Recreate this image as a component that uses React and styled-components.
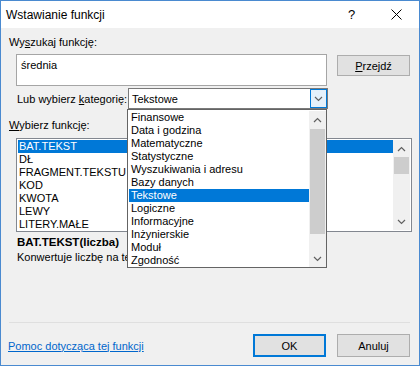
import React from "react";
import styled, { createGlobalStyle } from "styled-components";

const Global = createGlobalStyle`
  html, body { margin: 0; padding: 0; background: #ffffff; }
  * { box-sizing: border-box; }
`;

const FONT = `"Liberation Sans", Arial, sans-serif`;

const Window = styled.div`
  position: relative;
  width: 420px;
  height: 366px;
  border: 1px solid #4a8ad0;
  display: flex;
  flex-direction: column;
  font-family: ${FONT};
  font-size: 11px;
  color: #000;
  overflow: hidden;
`;

const TitleBar = styled.div`
  height: 27px;
  background: #fff;
  display: flex;
  align-items: center;
  padding-left: 5px;
  flex-shrink: 0;
`;

const Title = styled.div`
  flex: 1;
  font-size: 12px;
`;

const TitleButton = styled.div`
  width: 45px;
  height: 27px;
  display: flex;
  align-items: center;
  justify-content: center;
  font-size: 13px;
`;

const Body = styled.div`
  flex: 1;
  background: #f0f0f0;
  display: flex;
  flex-direction: column;
  padding: 0 9px 8px 7px;
`;

const Label = styled.div`
  height: 16px;
  line-height: 16px;
  margin-top: ${(p) => p.$mt || 0}px;
  margin-left: ${(p) => p.$ml || 0}px;
  white-space: nowrap;
`;

const U = styled.span`
  text-decoration: underline;
`;

const SearchRow = styled.div`
  display: flex;
  margin-top: 4px;
  margin-left: 8px;
  gap: 10px;
  align-items: flex-start;
`;

const SearchBox = styled.div`
  width: 200px;
  flex: 1;
  height: 32px;
  background: #fff;
  border: 1px solid #a5a5a5;
  padding: 2px 4px;
  line-height: 16px;
`;

const Button = styled.div`
  width: 73px;
  height: ${(p) => p.$h || 23}px;
  background: #e1e1e1;
  border: ${(p) => (p.$primary ? "2px solid #0078d7" : "1px solid #adadad")};
  display: flex;
  align-items: center;
  justify-content: center;
  margin-top: ${(p) => p.$mt || 0}px;
  flex-shrink: 0;
`;

const CategoryRow = styled.div`
  display: flex;
  align-items: center;
  margin-top: 2px;
  margin-left: 9px;
  height: 21px;
`;

const CategoryLabel = styled.div`
  width: 111px;
  white-space: nowrap;
`;

const Combo = styled.div`
  width: 200px;
  height: 21px;
  background: #fff;
  border: 1px solid #7a7a7a;
  display: flex;
  align-items: center;
  padding-left: 3px;
`;

const ComboText = styled.div`
  flex: 1;
`;

const ComboArrow = styled.div`
  width: 17px;
  height: 19px;
  background: #e5f1fb;
  border: 1px solid #0078d7;
  display: flex;
  align-items: center;
  justify-content: center;
`;

const ListBox = styled.div`
  margin-top: 5px;
  margin-left: 8px;
  width: 396px;
  height: 94px;
  background: #fff;
  border: 1px solid #828790;
  display: flex;
  padding: 1px;
`;

const Items = styled.div`
  flex: 1;
  display: flex;
  flex-direction: column;
`;

const Item = styled.div`
  height: 13px;
  line-height: 13px;
  padding-left: 1px;
  white-space: nowrap;
  background: ${(p) => (p.$sel ? "#0078d7" : "transparent")};
  color: ${(p) => (p.$sel ? "#fff" : "#000")};
`;

const Scroll = styled.div`
  width: 17px;
  background: #f0f0f0;
  display: flex;
  flex-direction: column;
  align-items: center;
`;

const ScrollBtn = styled.div`
  height: 17px;
  width: 17px;
  display: flex;
  align-items: center;
  justify-content: center;
  flex-shrink: 0;
`;

const ScrollTrack = styled.div`
  flex: 1;
  width: 100%;
  display: flex;
  flex-direction: column;
`;

const Thumb = styled.div`
  margin-top: ${(p) => p.$top}px;
  height: ${(p) => p.$h}px;
  width: 15px;
  margin-left: 1px;
  background: #cdcdcd;
`;

const FuncName = styled.div`
  margin-top: 2px;
  margin-left: 9px;
  font-weight: bold;
  font-size: 11.5px;
  height: 16px;
  line-height: 16px;
`;

const Description = styled.div`
  margin-left: 9px;
  width: 110px;
  overflow: hidden;
  height: 15px;
  line-height: 15px;
  white-space: nowrap;
`;

const Spacer = styled.div`
  flex: 1;
`;

const Separator = styled.div`
  height: 1px;
  background: #dfdfdf;
  margin-left: 1px;
  margin-bottom: 11px;
`;

const Footer = styled.div`
  display: flex;
  align-items: center;
  height: 23px;
  gap: 11px;
`;

const HelpLink = styled.div`
  flex: 1;
  color: #0066cc;
  text-decoration: underline;
`;

const Dropdown = styled.div`
  position: absolute;
  left: 126px;
  top: 108px;
  width: 200px;
  height: 159px;
  background: #fff;
  border: 1px solid #646464;
  display: flex;
  padding: 1px 0 0 1px;
`;

const DropItem = styled.div`
  height: 13px;
  line-height: 13px;
  padding-left: 2px;
  white-space: nowrap;
  background: ${(p) => (p.$sel ? "#0078d7" : "transparent")};
  color: ${(p) => (p.$sel ? "#fff" : "#000")};
`;

const Chevron = ({ up }) => (
  <svg width="9" height="6" viewBox="0 0 9 6">
    <path
      d={up ? "M1 5 L4.5 1.5 L8 5" : "M1 1 L4.5 4.5 L8 1"}
      fill="none"
      stroke="#606060"
      strokeWidth="1.2"
    />
  </svg>
);

const CloseIcon = () => (
  <svg width="11" height="11" viewBox="0 0 11 11">
    <path d="M0.5 0.5 L10.5 10.5 M10.5 0.5 L0.5 10.5" stroke="#000" strokeWidth="1" />
  </svg>
);

const functions = ["BAT.TEKST", "DŁ", "FRAGMENT.TEKSTU", "KOD", "KWOTA", "LEWY", "LITERY.MAŁE"];
const categories = [
  "Finansowe",
  "Data i godzina",
  "Matematyczne",
  "Statystyczne",
  "Wyszukiwania i adresu",
  "Bazy danych",
  "Tekstowe",
  "Logiczne",
  "Informacyjne",
  "Inżynierskie",
  "Moduł",
  "Zgodność",
];

export default function App() {
  return (
    <>
      <Global />
      <Window>
        <TitleBar>
          <Title>Wstawianie funkcji</Title>
          <TitleButton>?</TitleButton>
          <TitleButton>
            <CloseIcon />
          </TitleButton>
        </TitleBar>
        <Body>
          <Label $mt={6} $ml={1}>
            Wy<U>s</U>zukaj funkcję:
          </Label>
          <SearchRow>
            <SearchBox>średnia</SearchBox>
            <Button $mt={1} $h={21}>
              <span>
                <U>P</U>rzejdź
              </span>
            </Button>
          </SearchRow>
          <CategoryRow>
            <CategoryLabel>
              Lub wybierz <U>k</U>ategorię:
            </CategoryLabel>
            <Combo>
              <ComboText>Tekstowe</ComboText>
              <ComboArrow>
                <Chevron />
              </ComboArrow>
            </Combo>
          </CategoryRow>
          <Label $mt={8} $ml={1}>
            <U>W</U>ybierz funkcję:
          </Label>
          <ListBox>
            <Items>
              {functions.map((f, i) => (
                <Item key={f} $sel={i === 0}>
                  {f}
                </Item>
              ))}
            </Items>
            <Scroll>
              <ScrollBtn>
                <Chevron up />
              </ScrollBtn>
              <ScrollTrack>
                <Thumb $top={0} $h={17} />
              </ScrollTrack>
              <ScrollBtn>
                <Chevron />
              </ScrollBtn>
            </Scroll>
          </ListBox>
          <FuncName>BAT.TEKST(liczba)</FuncName>
          <Description>Konwertuje liczbę na tekst</Description>
          <Spacer />
          <Separator />
          <Footer>
            <HelpLink>Pomoc dotycząca tej funkcji</HelpLink>
            <Button $primary>OK</Button>
            <Button>Anuluj</Button>
          </Footer>
        </Body>
        <Dropdown>
          <Items>
            {categories.map((c) => (
              <DropItem key={c} $sel={c === "Tekstowe"}>
                {c}
              </DropItem>
            ))}
          </Items>
          <Scroll>
            <ScrollBtn>
              <Chevron up />
            </ScrollBtn>
            <ScrollTrack>
              <Thumb $top={1} $h={105} />
            </ScrollTrack>
            <ScrollBtn>
              <Chevron />
            </ScrollBtn>
          </Scroll>
        </Dropdown>
      </Window>
    </>
  );
}
